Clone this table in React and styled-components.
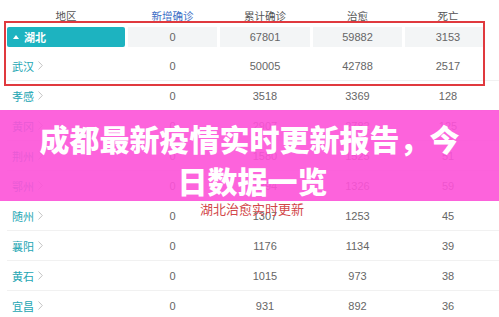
import React from "react";
import styled, { createGlobalStyle } from "styled-components";

const Global = createGlobalStyle`
  html, body { margin: 0; padding: 0; background: #fff; }
  body { font-family: "Liberation Sans", "Noto Sans CJK SC", sans-serif; }
`;

const Page = styled.div`
  position: relative;
  width: 499px;
  height: 317px;
  overflow: hidden;
  background: #fff;
  padding-left: 7px;
  box-sizing: border-box;
`;

const Grid = styled.div`
  display: grid;
  grid-template-columns: 118px 89px 90px 89px 78px;
  column-gap: 3px;
  align-items: stretch;
  box-sizing: border-box;
`;

const HeaderRow = styled(Grid)`
  height: 27px;
  padding-top: 3px;
  align-items: center;
  font-size: 10.5px;
  color: #555;
  font-family: "Noto Sans CJK SC", sans-serif;
`;

const HeadCell = styled.div`
  text-align: center;
  color: ${(p) => (p.$blue ? "#3d6fc6" : "#555")};
  &:last-child { padding-left: 8px; }
`;

const HubeiRow = styled(Grid)`
  height: 20px;
  margin-bottom: 4px;
`;

const HubeiName = styled.div`
  background: #1db3c0;
  border-radius: 2px;
  color: #fff;
  font-weight: 700;
  font-size: 11px;
  font-family: "Noto Sans CJK SC", sans-serif;
  display: flex;
  align-items: center;
  gap: 5px;
  padding-left: 6px;
`;

const Tri = styled.span`
  width: 0;
  height: 0;
  border-left: 3px solid transparent;
  border-right: 3px solid transparent;
  border-bottom: 4px solid #fff;
`;

const GrayCell = styled.div`
  background: #f3f5f6;
  display: flex;
  align-items: center;
  justify-content: center;
  font-size: 11px;
  color: #666;
  &:last-child { padding-left: 8px; }
`;

const Row = styled(Grid)`
  height: 30px;
  border-bottom: 1px solid #f1f1f1;
  align-items: center;
`;

const Name = styled.div`
  display: flex;
  align-items: center;
  gap: 4px;
  padding-left: 5px;
  font-size: 11px;
  color: #23a6b3;
  font-family: "Noto Sans CJK SC", sans-serif;
`;

const Num = styled.div`
  text-align: center;
  font-size: 11px;
  color: #666;
  &:last-child { padding-left: 8px; }
`;

const RedBox = styled.div`
  position: absolute;
  left: 4px;
  top: 21px;
  width: 481px;
  height: 65px;
  border: 2px solid #e0393e;
  box-sizing: border-box;
  pointer-events: none;
`;

const Caption = styled.div`
  position: absolute;
  left: 200px;
  top: 202px;
  font-size: 13px;
  line-height: 13px;
  color: #d2474a;
  font-family: "Noto Sans CJK SC", sans-serif;
`;

const Banner = styled.div`
  position: absolute;
  left: 0;
  top: 110px;
  width: 499px;
  height: 91px;
  background: rgba(253, 82, 216, 0.9);
  display: flex;
  flex-direction: column;
  align-items: center;
  padding-top: 7px;
  box-sizing: border-box;
`;

const BannerLine = styled.div`
  color: #fff;
  font-family: "Noto Sans CJK SC", sans-serif;
  font-weight: 900;
  font-size: 30px;
  line-height: 42px;
  white-space: nowrap;
  padding-left: ${(p) => p.$shift || 0}px;
`;

const Chevron = () => (
  <svg width="5" height="9" viewBox="0 0 5 9">
    <polyline points="0.5,0.5 4.3,4.5 0.5,8.5" fill="none" stroke="#c4c4c4" strokeWidth="1" />
  </svg>
);

const rows = [
  ["武汉", "0", "50005", "42788", "2517"],
  ["孝感", "0", "3518", "3369", "128"],
  ["黄冈", "0", "2907", "2782", "125"],
  ["荆州", "0", "1580", "1525", "51"],
  ["鄂州", "0", "1394", "1326", "59"],
  ["随州", "0", "1307", "1253", "45"],
  ["襄阳", "0", "1176", "1134", "39"],
  ["黄石", "0", "1015", "973", "38"],
  ["宜昌", "0", "931", "892", "36"],
];

export default function App() {
  return (
    <>
      <Global />
      <Page>
        <HeaderRow>
          <HeadCell>地区</HeadCell>
          <HeadCell $blue>新增确诊</HeadCell>
          <HeadCell>累计确诊</HeadCell>
          <HeadCell>治愈</HeadCell>
          <HeadCell>死亡</HeadCell>
        </HeaderRow>
        <HubeiRow>
          <HubeiName>
            <Tri />
            湖北
          </HubeiName>
          <GrayCell>0</GrayCell>
          <GrayCell>67801</GrayCell>
          <GrayCell>59882</GrayCell>
          <GrayCell>3153</GrayCell>
        </HubeiRow>
        {rows.map((r) => (
          <Row key={r[0]}>
            <Name>
              {r[0]}
              <Chevron />
            </Name>
            <Num>{r[1]}</Num>
            <Num>{r[2]}</Num>
            <Num>{r[3]}</Num>
            <Num>{r[4]}</Num>
          </Row>
        ))}
        <RedBox />
        <Caption>湖北治愈实时更新</Caption>
        <Banner>
          <BannerLine>成都最新疫情实时更新报告，今</BannerLine>
          <BannerLine $shift={6}>日数据一览</BannerLine>
        </Banner>
      </Page>
    </>
  );
}
